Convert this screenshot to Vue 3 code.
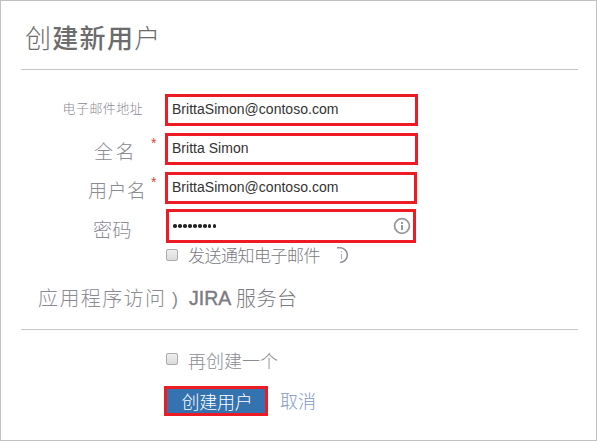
<script setup>
const fields = [
  { key: 'email', label: '电子邮件地址', value: 'BrittaSimon@contoso.com', required: false },
  { key: 'full', label: '全名', value: 'Britta Simon', required: true },
  { key: 'user', label: '用户名', value: 'BrittaSimon@contoso.com', required: true },
  { key: 'pass', label: '密码', value: '', required: false }
]
</script>

<template>
  <main class="dialog">
    <h1 class="title"><span class="thin">创</span><span>建新用</span><span class="thin last">户</span></h1>
    <form class="form" @submit.prevent>
      <div v-for="f in fields" :key="f.key" class="row" :class="f.key">
        <label class="label"><span>{{ f.label }}</span></label>
        <div class="star">{{ f.required ? '*' : '' }}</div>
        <div class="box">
          <span v-if="f.key !== 'pass'" class="value">{{ f.value }}</span>
          <template v-else>
            <span class="dots"><i v-for="n in 9" :key="n"></i></span>
            <svg class="info" width="18" height="18" viewBox="0 0 18 18">
              <circle cx="9" cy="9" r="7.4" fill="none" stroke="#999" stroke-width="1.8" />
              <path d="M8 5h2v2H8zM8 8h2v5H8z" fill="#999" />
            </svg>
          </template>
        </div>
      </div>
      <div class="check notify">
        <span class="checkbox"></span>
        <span class="text">发送通知电子邮件</span>
        <svg class="half" width="13" height="18" viewBox="0 0 13 18">
          <path d="M0 1.7h3.5a7.4 7.4 0 0 1 1 14.6H3" fill="none" stroke="#929296" stroke-width="1.5" />
          <path d="M4.5 5v1.5M4.5 8v5" fill="none" stroke="#a3b4c6" stroke-width="1.2" />
        </svg>
      </div>
      <div class="access">
        <span class="access-label">应用程序访问</span><span class="paren">)</span>
        <span class="jira">JIRA</span><span class="desk">服务台</span>
      </div>
      <footer class="footer">
        <div class="check again">
          <span class="checkbox"></span>
          <span class="text">再创建一个</span>
        </div>
        <div class="actions">
          <button class="create">创建用户</button>
          <a class="cancel">取消</a>
        </div>
      </footer>
    </form>
  </main>
</template>

<style>
body { margin: 0; background: #fff; }
</style>

<style scoped>
* { box-sizing: border-box; }
.dialog {
  width: 597px;
  height: 441px;
  border: 1px solid #c1c1c1;
  padding: 0 18px 0 20px;
  background: #fff;
  color: #8c8a92;
  font-family: "Liberation Sans", "Noto Sans CJK SC", sans-serif;
  font-weight: 300;
  white-space: nowrap;
  overflow: hidden;
}
.title {
  height: 69px;
  margin: 0;
  padding: 18px 0 0 4px;
  border-bottom: 1px solid #c8c8c8;
  font-size: 26px;
  line-height: 40px;
  letter-spacing: 1.3px;
  font-weight: 500;
  color: #6c6c6c;
}
.thin { font-weight: 300; }
.form { padding-top: 24px; }
.row { display: flex; height: 32px; margin-bottom: 7px; }
.label {
  width: 129px;
  display: flex;
  justify-content: flex-end;
  font-size: 19px;
  line-height: 39px;
}
.star { width: 15px; padding-left: 1px; font-size: 14px; line-height: 21px; color: #d04437; font-weight: 400; }
.box {
  width: 253px;
  border: 3px solid #ed1c24;
  padding-left: 4px;
  display: flex;
  align-items: center;
}
.value { font-size: 14px; line-height: 20px; color: #333; font-weight: 400; letter-spacing: 0.02px; padding-bottom: 2px; }
.email .label { font-size: 13px; line-height: 29px; letter-spacing: 0.4px; padding-right: 7px; }
.full .label { letter-spacing: 2.5px; padding-right: 13px; }
.user .label { letter-spacing: 0.3px; padding-right: 4px; }
.user .box { width: 252px; }
.user { margin-bottom: 5px; }
.pass { height: 34px; margin-bottom: 5px; }
.pass .label { width: 130px; letter-spacing: 0.5px; padding-right: 19px; line-height: 43px; }
.pass .box { width: 250px; justify-content: space-between; padding-right: 2px; }
.dots { display: flex; gap: 1.4px; }
.dots i { width: 3.6px; height: 3.6px; border-radius: 50%; background: #222; }
.check { display: flex; align-items: center; height: 14px; padding-left: 145px; }
.checkbox {
  width: 12px;
  height: 12px;
  border: 1px solid #ababab;
  border-radius: 2px;
  background: linear-gradient(#eee, #dcdcdc);
}
.text { margin-left: 10px; font-size: 17px; line-height: 20px; letter-spacing: -0.5px; padding-top: 3px; }
.notify .text { color: #7c7a82; }
.half { margin-left: 17px; }
.access { display: flex; padding: 19px 0 0 17px; height: 68px; line-height: 36px; font-size: 20px; border-bottom: 1px solid #c8c8c8; }
.access-label { width: 134px; letter-spacing: 1.4px; }
.paren { width: 17px; line-height: 36px; font-size: 18px; }
.jira { width: 47px; color: #7c7a82; font-size: 19.5px; line-height: 35px; -webkit-text-stroke: 0.4px #7c7a82; }
.desk { color: #7c7a82; letter-spacing: 0.5px; }
.footer { padding-top: 22px; }
.again .text { font-size: 18px; letter-spacing: 0; padding-top: 6px; }
.actions { display: flex; padding: 20px 0 0 143px; }
.create {
  width: 104px;
  height: 30px;
  border: 3px solid #ed1c24;
  padding: 0 0 0 2px;
  background: #3572b0;
  color: #fff;
  font: 300 18px/24px "Noto Sans CJK SC", sans-serif;
  letter-spacing: -0.2px;
}
.cancel { margin-left: 12px; font-size: 18px; line-height: 32px; color: #7f98c8; }
</style>
